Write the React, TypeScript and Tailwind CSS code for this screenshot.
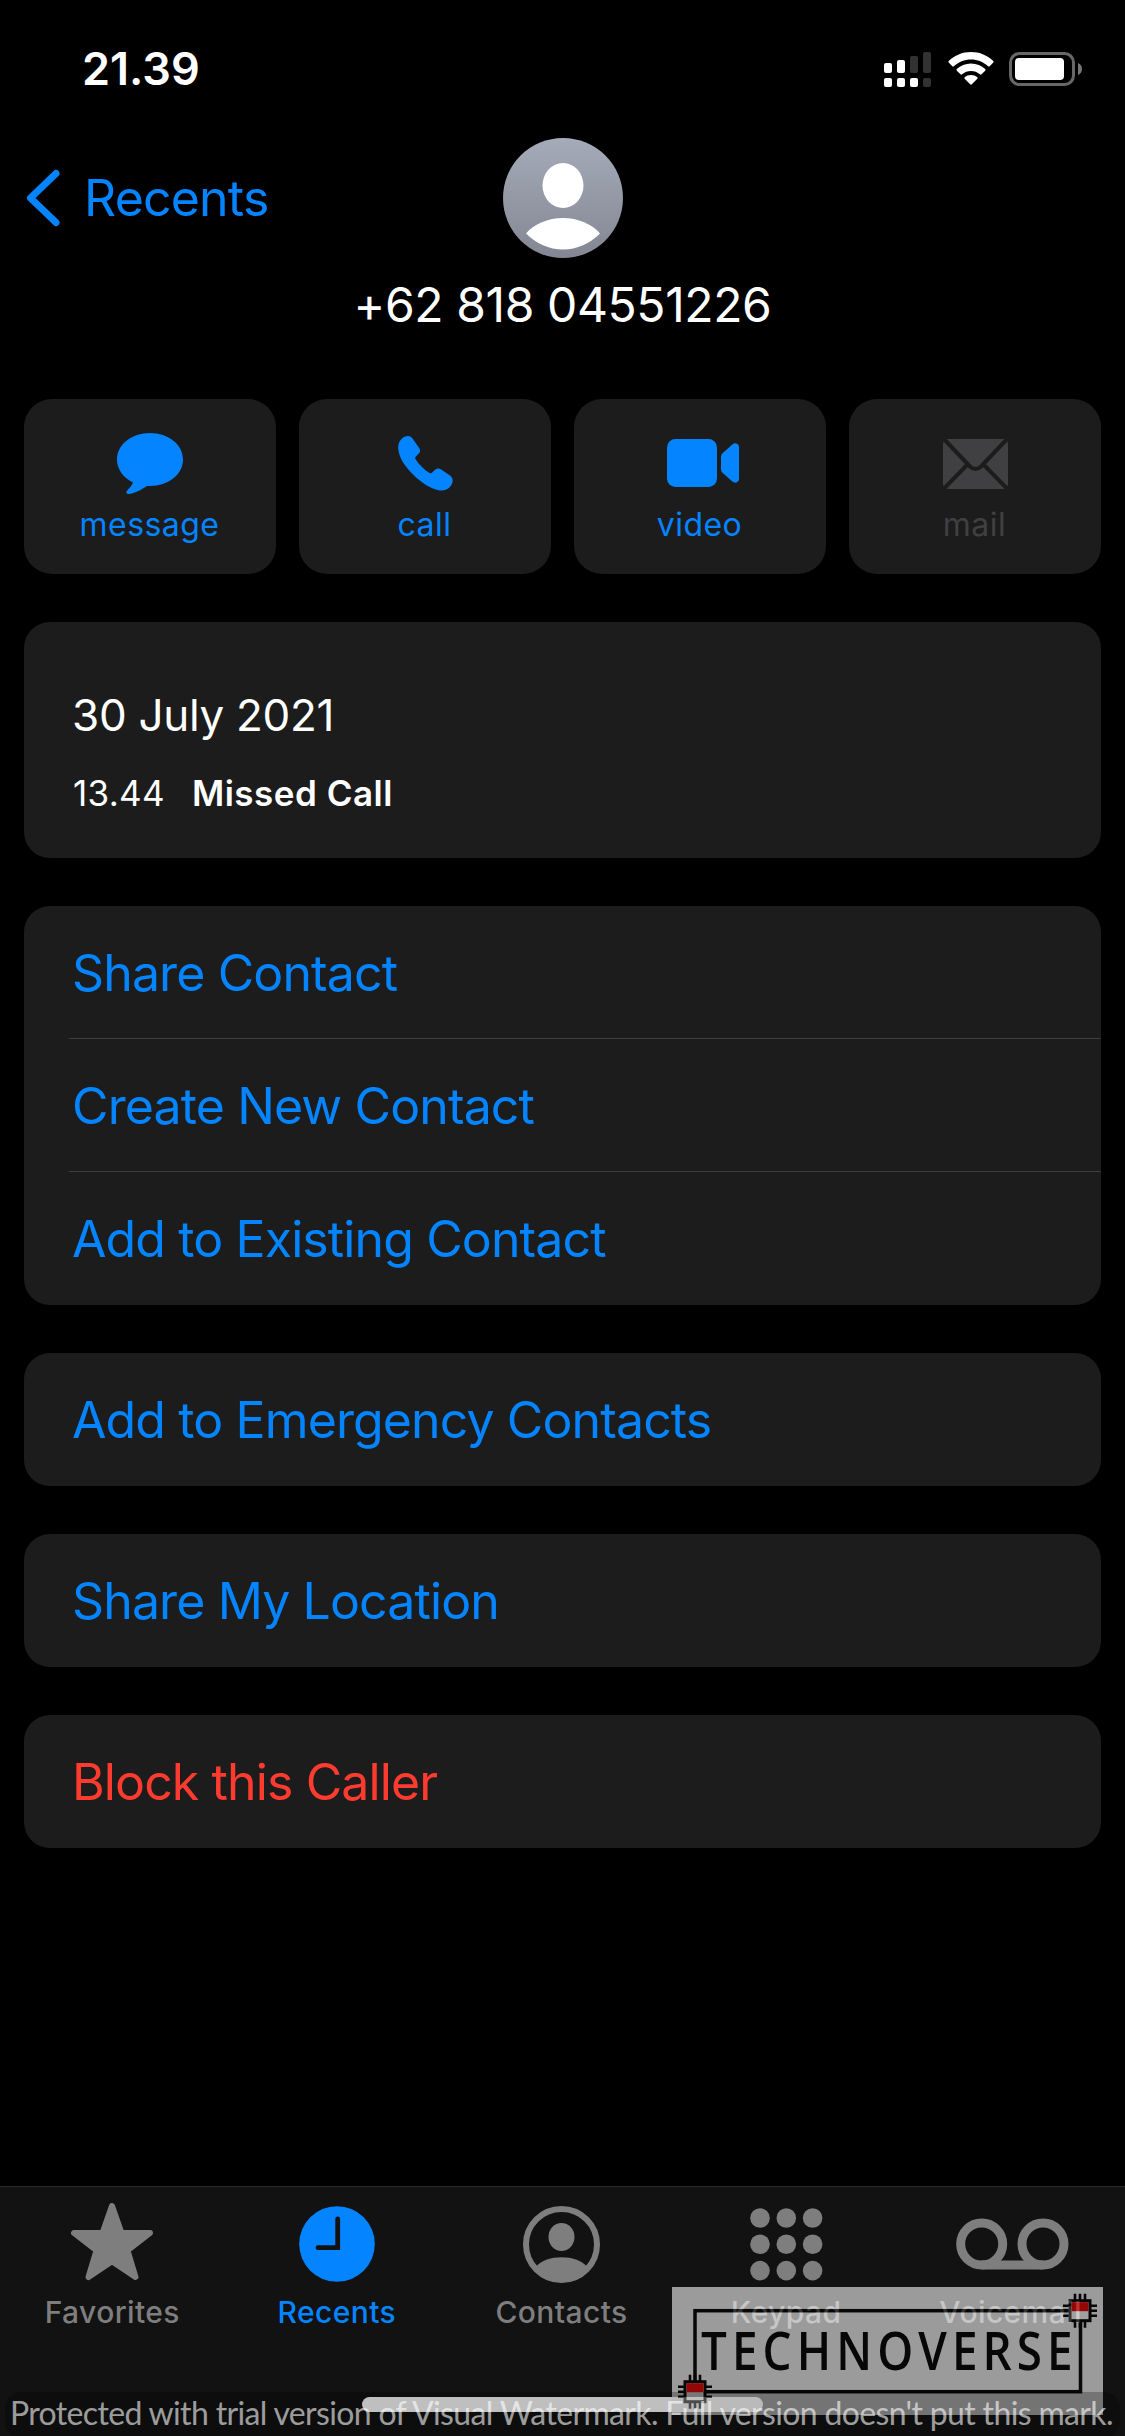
import type { ReactNode } from "react";

function SignalIcon() {
  return (
    <svg width="49" height="36" viewBox="0 0 49 36" fill="#fff">
      <rect x="0" y="11" width="8" height="10" rx="2" />
      <rect x="13" y="8" width="8" height="13" rx="2" />
      <rect x="26" y="4" width="8" height="17" rx="2" fill="#323232" />
      <rect x="39" y="0" width="8" height="21" rx="2" fill="#323232" />
      <rect x="0" y="26" width="8" height="9" rx="2" />
      <rect x="13" y="26" width="8" height="9" rx="2" />
      <rect x="26" y="26" width="8" height="9" rx="2" />
      <rect x="39" y="26" width="8" height="9" rx="2" fill="#323232" />
    </svg>
  );
}

function WifiIcon() {
  return (
    <svg width="46" height="34" viewBox="0 0 46 34" fill="#fff">
      <path d="M23 0C31.800 0 39.500 3.400 45.300 9Q46 9.800 45.300 10.600L41.700 14.200Q40.900 14.900 40.100 14.200C35.500 10 29.500 7.400 23 7.400S10.500 10 5.900 14.200Q5.100 14.900 4.300 14.200L.7 10.600Q0 9.800.7 9C6.500 3.400 14.200 0 23 0Z" />
      <path d="M23 11.500C28.600 11.500 33.500 13.600 37.200 17.100Q38 17.900 37.200 18.700L33.500 22.300Q32.700 23 31.900 22.300C29.500 20.200 26.400 19 23 19S16.500 20.200 14.100 22.300Q13.300 23 12.500 22.300L8.800 18.700Q8 17.900 8.800 17.100C12.500 13.600 17.400 11.500 23 11.500Z" />
      <path d="M23 23C25.500 23 27.600 23.800 29.300 25.200Q30.100 26 29.300 26.800L23.800 32.300Q23 33 22.200 32.300L16.700 26.800Q15.900 26 16.700 25.200C18.400 23.800 20.500 23 23 23Z" />
    </svg>
  );
}

function BatteryIcon() {
  return (
    <svg width="73" height="34" viewBox="0 0 73 34">
      <rect x="1.500" y="1.500" width="63" height="31" rx="9" fill="none" stroke="#676767" strokeWidth="3" />
      <rect x="6" y="6" width="49" height="22" rx="4" fill="#fff" />
      <path d="M69 11C71.500 12 73 14.300 73 17S71.500 22 69 23Z" fill="#767676" />
    </svg>
  );
}

function BackChevron() {
  return (
    <svg width="34" height="58" viewBox="0 0 34 58" fill="none">
      <path d="M30 4.500L4.500 29L30 53.500" stroke="currentColor" strokeWidth="7" strokeLinecap="round" strokeLinejoin="round" />
    </svg>
  );
}

function Avatar() {
  return (
    <svg width="120" height="120" viewBox="0 0 120 120">
      <defs>
        <linearGradient id="avatar" x1="0" y1="0" x2="0" y2="1">
          <stop offset="0" stopColor="#a5abb9" />
          <stop offset="1" stopColor="#848793" />
        </linearGradient>
      </defs>
      <circle cx="60" cy="60" r="60" fill="url(#avatar)" />
      <ellipse cx="60" cy="47.500" rx="20.500" ry="22.500" fill="#fff" />
      <path d="M23 95.500C31 86 45 80 60 80S89 86 97 95.500C87 105.500 74 111.500 60 111.500S33 105.500 23 95.500Z" fill="#fff" />
    </svg>
  );
}

function MessageIcon() {
  return (
    <svg width="66" height="62" viewBox="0 -1 66 62" fill="currentColor">
      <path d="M33 0C51.500 0 66 11.600 66 26.500S51.500 53 33 53H30C24 57 17.500 60.500 12 61C9.500 61.200 8.500 59.200 10.200 57.400C12.600 55 14.800 52.500 16 49.500C6.300 44.500 0 36.500 0 26.500C0 11.600 14.500 0 33 0Z" />
    </svg>
  );
}

function PhoneIcon() {
  return (
    <svg width="55" height="55" viewBox="0 0 55 55" fill="currentColor">
      <path d="M3.200 3.300C7-.6 12-1.200 14.500 2.500L21 11.800C22.700 14.300 22.400 16 20.300 18.100L17.900 20.400C17.100 21.200 17 22.200 17.600 23.200C21 28.600 26 33.500 31.600 36.900C32.500 37.400 33.500 37.300 34.200 36.600L36.700 34.100C38.800 32 40.800 31.900 43.200 33.500L52.300 39.700C55.800 42.200 55.400 47.500 51.600 51.300C46.700 56.200 38.700 55.100 30.200 50.300C22.200 45.800 14 38.600 8 30.600C0 20-2.200 8.700 3.200 3.300Z" />
    </svg>
  );
}

function VideoIcon() {
  return (
    <svg width="72" height="48" viewBox="0 0 72 48" fill="currentColor" className="ml-1.5">
      <rect width="50" height="48" rx="8.500" />
      <path d="M54 17.500Q54 15.500 55.500 14.200L65 5.800Q67 4 69.500 4.400Q72 5 72 8V40Q72 43 69.500 43.600Q67 44 65 42.200L55.500 33.800Q54 32.500 54 30.500Z" />
    </svg>
  );
}

function MailIcon() {
  return (
    <svg width="65" height="50" viewBox="0 0 65 50" className="mt-px">
      <rect width="65" height="50" rx="5" fill="currentColor" />
      <path d="M0 -1L27 27.500Q32.500 32.500 38 27.500L65 -1M0 50.500L24.500 25.500M65 50.500L40.500 25.500" fill="none" stroke="#1c1c1c" strokeWidth="4" />
    </svg>
  );
}

function StarIcon() {
  return (
    <svg width="82" height="78" viewBox="0 0 82 78" fill="currentColor" className="-mt-1">
      <path
        d="M41 3L50.500 30H79L56.500 47.500L64.500 74L41 58.200L17.500 74L25.500 47.500L3 30H31.500Z"
        stroke="currentColor"
        strokeWidth="6"
        strokeLinejoin="round"
      />
    </svg>
  );
}

function ClockIcon() {
  return (
    <svg width="76" height="76" viewBox="0 0 76 76">
      <circle cx="38" cy="38" r="37.800" fill="currentColor" />
      <path d="M38.700 13V41.700H19" fill="none" stroke="#121212" strokeWidth="4.800" strokeLinecap="round" />
    </svg>
  );
}

function ContactsIcon() {
  return (
    <svg width="77" height="77" viewBox="0 0 77 77" fill="currentColor">
      <circle cx="38.500" cy="38.500" r="35.500" fill="none" stroke="currentColor" strokeWidth="6" />
      <ellipse cx="38.500" cy="31" rx="13" ry="14" />
      <path d="M13.500 60C19 54.500 28 51.200 38.500 51.200S58 54.500 63.500 60C57 69 48.500 74 38.500 74S20 69 13.500 60Z" />
    </svg>
  );
}

function KeypadIcon() {
  const steps = [10, 36.3, 62.6];
  return (
    <svg width="73" height="73" viewBox="0 0 73 73" fill="currentColor">
      {steps.map((cy) => steps.map((cx) => <circle key={`${cx}-${cy}`} cx={cx} cy={cy} r="9.800" />))}
    </svg>
  );
}

function VoicemailIcon() {
  return (
    <svg width="113" height="52" viewBox="0 0 113 52" fill="none" stroke="currentColor" strokeWidth="9" className="ml-[3px]">
      <circle cx="25.700" cy="26" r="21" />
      <circle cx="87" cy="26" r="21" />
      <path d="M25.700 47H87" />
    </svg>
  );
}

function Chip({ x, y }: { x: number; y: number }) {
  return (
    <g transform={`translate(${x} ${y})`}>
      <path d="M-5-17V17M0-17V17M5-17V17M-17-5H17M-17 0H17M-17 5H17" stroke="#000" strokeWidth="2.600" />
      <rect x="-10" y="-10" width="20" height="20" fill="#fff" stroke="#000" strokeWidth="3" />
      <rect x="-8.500" y="-8.500" width="17" height="9" fill="#e90000" />
    </g>
  );
}

// Logo translúcido sobre la barra de pestañas
function BrandMark() {
  return (
    <div className="absolute top-[2287px] left-[672px] h-32 w-[431px] bg-[#f6f6f6] opacity-60">
      <svg className="absolute inset-0" width="431" height="128" viewBox="0 0 431 128">
        <rect x="23" y="23.700" width="385.500" height="81" fill="none" stroke="#000" strokeWidth="3.500" />
        <Chip x={23} y={104.7} />
        <Chip x={408} y={23.7} />
      </svg>
      <span className="absolute top-[33px] left-[29px] origin-left scale-x-[0.88] font-['Open_Sans'] text-[52px] leading-[60px] font-semibold tracking-[5.8px] whitespace-nowrap text-black">
        TECHNOVERSE
      </span>
    </div>
  );
}

const actions: { label: string; icon: ReactNode; disabled?: boolean }[] = [
  { label: "message", icon: <MessageIcon /> },
  { label: "call", icon: <PhoneIcon /> },
  { label: "video", icon: <VideoIcon /> },
  { label: "mail", icon: <MailIcon />, disabled: true },
];

const tabs: { label: string; icon: ReactNode; active?: boolean }[] = [
  { label: "Favorites", icon: <StarIcon /> },
  { label: "Recents", icon: <ClockIcon />, active: true },
  { label: "Contacts", icon: <ContactsIcon /> },
  { label: "Keypad", icon: <KeypadIcon /> },
  { label: "Voicemail", icon: <VoicemailIcon /> },
];

function Row({ children, danger }: { children: ReactNode; danger?: boolean }) {
  return (
    <button
      className={`flex h-[133px] w-full items-center pt-0.5 pl-12 text-left text-[50px] tracking-[-0.88px] whitespace-nowrap ${danger ? "text-[#ff3b30]" : "text-[#0584ff]"}`}
    >
      {children}
    </button>
  );
}

function Group({ children }: { children: ReactNode }) {
  return <section className="overflow-hidden rounded-[26px] bg-[#1c1c1c]">{children}</section>;
}

export default function App() {
  return (
    <div className="relative flex h-[2436px] w-[1125px] flex-col overflow-hidden bg-black font-[Inter,sans-serif] text-white">
      <header className="flex h-[138px] items-start justify-between pr-[43px] pl-[82px]">
        <span className="mt-[42px] text-[45px] leading-[54px] font-semibold">21.39</span>
        <div className="mt-[52px] flex items-start gap-[15px]">
          <SignalIcon />
          <WifiIcon />
          <BatteryIcon />
        </div>
      </header>

      <div className="grid h-[120px] grid-cols-3 items-center">
        <button className="flex items-center gap-6 pl-[26px] text-[#0584ff]">
          <BackChevron />
          <span className="text-[50px] leading-[60px] tracking-[-0.8px]">Recents</span>
        </button>
        <div className="flex justify-center">
          <Avatar />
        </div>
      </div>
      <h1 className="mt-[17px] h-[61px] text-center text-[48px] leading-[60px] tracking-[-0.4px]">+62 818 04551226</h1>

      <main className="mt-[63px] flex flex-col gap-12 px-6">
        <div className="grid grid-cols-4 gap-[23px]">
          {actions.map(({ label, icon, disabled }) => (
            <button
              key={label}
              className={`flex h-[175px] flex-col items-center rounded-[28px] bg-[#1c1c1c] pt-[33px] ${disabled ? "text-[#404042]" : "text-[#0584ff]"}`}
            >
              <span className="flex h-[62px] items-center">{icon}</span>
              <span className="mt-[11px] pr-px text-[32px] leading-[40px] tracking-[0.45px]">{label}</span>
            </button>
          ))}
        </div>

        <Group>
          <div className="h-[236px] pt-[66px] pl-12">
            <p className="text-[44px] leading-[54px] tracking-[-0.3px]">30 July 2021</p>
            <p className="mt-[29px] flex gap-[27px] pl-px text-[35px] leading-[44px]">
              <span className="tracking-[0.3px]">13.44</span>
              <span className="font-semibold tracking-[0.5px]">Missed Call</span>
            </p>
          </div>
        </Group>

        <Group>
          <Row>Share Contact</Row>
          <hr className="-mt-px ml-[45px] border-[#3d3d40]" />
          <Row>Create New Contact</Row>
          <hr className="-mt-px ml-[45px] border-[#3d3d40]" />
          <Row>Add to Existing Contact</Row>
        </Group>
        <Group>
          <Row>Add to Emergency Contacts</Row>
        </Group>
        <Group>
          <Row>Share My Location</Row>
        </Group>
        <Group>
          <Row danger>Block this Caller</Row>
        </Group>
      </main>

      <nav className="mt-auto flex h-[250px] flex-col border-t border-[#2a2a2a] bg-[#121212]">
        <div className="grid grid-cols-5 pr-0.5">
          {tabs.map(({ label, icon, active }) => (
            <button key={label} className={`flex flex-col items-center ${active ? "text-[#0584ff]" : "text-[#7e7e7e]"}`}>
              <span className="mt-[17px] flex h-20 items-center">{icon}</span>
              <span className="mt-2 text-[30px] leading-[40px] font-medium tracking-[0.4px]">{label}</span>
            </button>
          ))}
        </div>
        <div className="mx-auto mt-auto mb-6 h-[15px] w-[401px] rounded-full bg-white" />
      </nav>

      <BrandMark />
      <p className="absolute top-[2392px] left-[5px] h-[46px] w-[1115px] rounded-[16px] bg-black/25 pl-[5px] font-[Lato] text-[32px] leading-[42px] tracking-[-0.65px] whitespace-nowrap text-white/60">
        Protected with trial version of Visual Watermark. Full version doesn't put this mark.
      </p>
    </div>
  );
}
